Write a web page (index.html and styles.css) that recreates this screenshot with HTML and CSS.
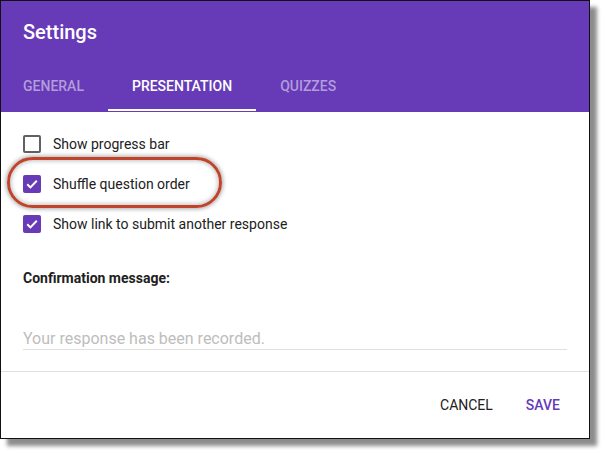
FILE: index.html
```html
<!DOCTYPE html>
<html>
<head>
<meta charset="utf-8">
<link rel="stylesheet" href="styles.css">
</head>
<body>
<div class="dialog">
  <div class="header">
    <div class="title">Settings</div>
    <div class="tabs">
      <div class="tab">GENERAL</div>
      <div class="tab active">PRESENTATION</div>
      <div class="tab">QUIZZES</div>
    </div>
  </div>
  <div class="content">
    <div class="options">
      <div class="option">
        <span class="box"></span>
        <span class="label">Show progress bar</span>
      </div>
      <div class="option">
        <span class="box checked"><svg viewBox="0 0 18 18" width="18" height="18"><path d="M4.2 9.3 L7.4 12.4 L13.8 5.8" fill="none" stroke="#fff" stroke-width="2"/></svg></span>
        <span class="label">Shuffle question order</span>
      </div>
      <div class="option">
        <span class="box checked"><svg viewBox="0 0 18 18" width="18" height="18"><path d="M4.2 9.3 L7.4 12.4 L13.8 5.8" fill="none" stroke="#fff" stroke-width="2"/></svg></span>
        <span class="label">Show link to submit another response</span>
      </div>
    </div>
    <div class="field-label">Confirmation message:</div>
    <div class="input">Your response has been recorded.</div>
  </div>
  <div class="divider"></div>
  <div class="footer">
    <span class="btn">CANCEL</span>
    <span class="btn primary">SAVE</span>
  </div>
  <div class="highlight"></div>
</div>
</body>
</html>
```
FILE: styles.css
```css
html, body {
  margin: 0;
  padding: 0;
  background: #fff;
}
body {
  font-family: Roboto, "Liberation Sans", sans-serif;
  width: 605px;
  height: 453px;
  overflow: hidden;
}
.dialog {
  position: relative;
  width: 588px;
  border: 1px solid #111;
  background: #fff;
  box-shadow: 7px 7px 4px rgba(0, 0, 0, 0.45);
  padding-bottom: 1px;
}
.header {
  background: #673ab7;
  padding-top: 19px;
  padding-bottom: 1px;
}
.title {
  color: #fff;
  font-size: 20px;
  line-height: 24px;
  font-weight: 500;
  padding-left: 22px;
}
.tabs {
  display: flex;
  margin-top: 20px;
  margin-left: -2px;
}
.tab {
  padding: 0 24px;
  font-size: 14px;
  font-weight: 500;
  line-height: 45px;
  color: #b39ddb;
  border-bottom: 2px solid transparent;
}
.tab.active {
  color: #fff;
  border-bottom-color: #fff;
}
.content {
  padding: 23px 22px 0 22px;
}
.options {
  display: flex;
  flex-direction: column;
  gap: 22px;
}
.option {
  display: flex;
  align-items: center;
  height: 18px;
  gap: 12px;
}
.box {
  box-sizing: border-box;
  width: 18px;
  height: 18px;
  border: 2px solid #616161;
  border-radius: 2px;
  display: flex;
  align-items: center;
  justify-content: center;
}
.box.checked {
  border: none;
  background: #673ab7;
}
.label {
  font-size: 14px;
  line-height: 20px;
  color: #212121;
}
.field-label {
  margin-top: 37px;
  font-size: 14px;
  line-height: 16px;
  font-weight: 700;
  color: #212121;
}
.input {
  margin-top: 43px;
  font-size: 16px;
  line-height: 20px;
  color: #bdbdbd;
  border-bottom: 1px solid #e0e0e0;
}
.divider {
  margin-top: 21px;
  height: 1px;
  background: #e0e0e0;
}
.footer {
  display: flex;
  justify-content: flex-end;
  gap: 33px;
  padding: 23px 29px 22px 0;
}
.btn {
  font-size: 14px;
  line-height: 20px;
  font-weight: 400;
  color: #212121;
}
.btn.primary {
  font-weight: 500;
  color: #673ab7;
}
.highlight {
  position: absolute;
  left: 6px;
  top: 156px;
  width: 209px;
  height: 45px;
  border: 3px solid #c0442b;
  border-radius: 26px;
  box-shadow: 0 0 4px 1px rgba(0, 0, 0, 0.35), inset 0 0 4px 1px rgba(0, 0, 0, 0.25);
  pointer-events: none;
}
```
